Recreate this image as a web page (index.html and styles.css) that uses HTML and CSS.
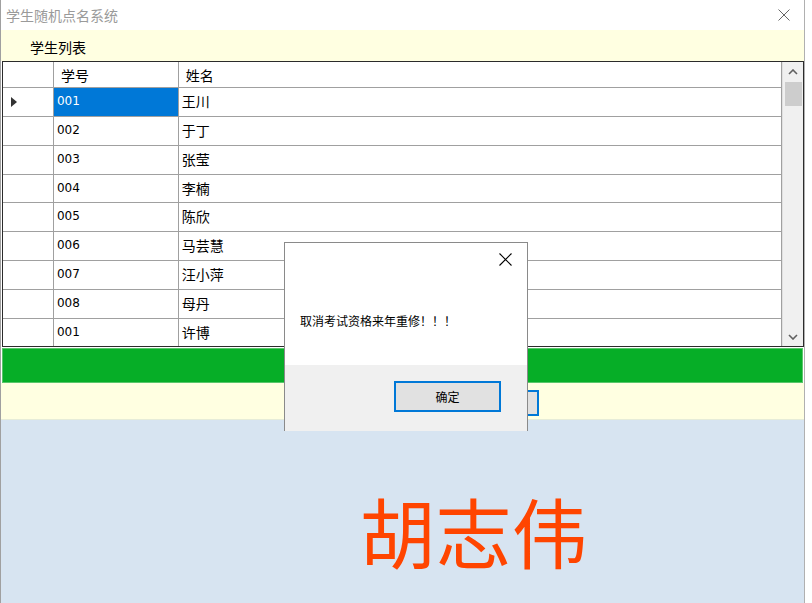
FILE: index.html
```html
<!DOCTYPE html>
<html lang="zh-CN">
<head>
  <meta charset="UTF-8">
  <title>学生随机点名系统</title>
  <link rel="stylesheet" href="styles.css">
</head>
<body>
<div class="win">
  <div class="titlebar">
    <span class="title">学生随机点名系统</span>
    <svg class="close" width="12" height="12" viewBox="0 0 12 12"><path d="M0.5 0.5L11.5 11.5M11.5 0.5L0.5 11.5" stroke="#666" stroke-width="1" fill="none"/></svg>
  </div>
  <div class="labelbar">学生列表</div>

  <div class="grid">
    <div class="grid-main">
      <div class="row head">
        <div class="rh"></div><div class="c1">学号</div><div class="c2">姓名</div>
      </div>
      <div class="row">
        <div class="rh"><span class="arrow"></span></div><div class="c1 num sel">001</div><div class="c2">王川</div>
      </div>
      <div class="row"><div class="rh"></div><div class="c1 num">002</div><div class="c2">于丁</div></div>
      <div class="row"><div class="rh"></div><div class="c1 num">003</div><div class="c2">张莹</div></div>
      <div class="row"><div class="rh"></div><div class="c1 num">004</div><div class="c2">李楠</div></div>
      <div class="row"><div class="rh"></div><div class="c1 num">005</div><div class="c2">陈欣</div></div>
      <div class="row"><div class="rh"></div><div class="c1 num">006</div><div class="c2">马芸慧</div></div>
      <div class="row"><div class="rh"></div><div class="c1 num">007</div><div class="c2">汪小萍</div></div>
      <div class="row"><div class="rh"></div><div class="c1 num">008</div><div class="c2">母丹</div></div>
      <div class="row"><div class="rh"></div><div class="c1 num">001</div><div class="c2">许博</div></div>
    </div>
    <div class="vscroll">
      <svg width="10" height="6" viewBox="0 0 10 6"><path d="M1 5L5 1L9 5" stroke="#606060" stroke-width="1.6" fill="none"/></svg>
      <div class="thumb"></div>
      <div class="track"></div>
      <svg width="10" height="6" viewBox="0 0 10 6"><path d="M1 1L5 5L9 1" stroke="#606060" stroke-width="1.6" fill="none"/></svg>
    </div>
  </div>

  <div class="greenbar"></div>
  <div class="btnbar"><button class="startbtn">开始</button></div>
  <div class="namepanel"><span class="bigname">胡志伟</span></div>
</div>

<div class="dialog">
  <div class="dlg-top">
    <svg class="dlg-close" width="13" height="13" viewBox="0 0 13 13"><path d="M0.5 0.5L12.5 12.5M12.5 0.5L0.5 12.5" stroke="#000" stroke-width="1.1" fill="none"/></svg>
    <div class="dlg-msg">取消考试资格来年重修！！！</div>
  </div>
  <div class="dlg-bottom">
    <button class="okbtn">确定</button>
  </div>
</div>
</body>
</html>
```

FILE: styles.css
```css
body { margin: 0; background: #fff; font-family: "Noto Sans CJK SC", "Noto Sans", sans-serif; }

.win {
  width: 803px;
  height: 603px;
  border-left: 1px solid #a0a0a0;
  border-right: 1px solid #b0b0b0;
  display: flex;
  flex-direction: column;
  overflow: hidden;
}

.titlebar {
  height: 30px;
  display: flex;
  align-items: center;
  justify-content: space-between;
  padding: 0 14px 0 5px;
  background: #fff;
}
.title { font-size: 14px; color: #9a9a9a; }

.labelbar {
  height: 31px;
  background: #ffffe1;
  font-size: 14px;
  color: #000;
  padding-left: 29px;
  line-height: 34px;
}

.grid {
  margin: 0 0 0 1px;
  width: 800px;
  height: 284px;
  border: 1px solid #2b2b2b;
  display: flex;
  background: #fff;
  overflow: hidden;
}
.grid-main { flex: 1; overflow: hidden; }
.row { display: flex; height: 28px; border-bottom: 1px solid #a0a0a0; }
.row.head { height: 25px; }
.row > div { box-sizing: border-box; border-right: 1px solid #a0a0a0; font-size: 14px; line-height: 27px; padding-left: 3px; white-space: nowrap; }
.row.head > div { line-height: 26px; padding-left: 7px; }
.row:nth-child(5) { height: 27px; }
.rh { width: 51px; position: relative; }
.c1 { width: 125px; }
.c2 { width: 604px; border-right: none; }
.num { font-family: "DejaVu Sans", sans-serif; font-size: 12px !important; }
.sel { background: #0078d7; color: #fff; }
.arrow {
  position: absolute;
  left: 8px;
  top: 9px;
  width: 0; height: 0;
  border-left: 6px solid #333;
  border-top: 5px solid transparent;
  border-bottom: 5px solid transparent;
}

.vscroll {
  width: 21px;
  background: #f0f0f0;
  border-left: 1px solid #e0e0e0;
  display: flex;
  flex-direction: column;
  align-items: center;
  padding: 7px 0 6px;
  box-sizing: border-box;
}
.thumb { width: 17px; height: 24px; background: #cdcdcd; margin-top: 7px; }
.track { flex: 1; }

.greenbar {
  height: 35px;
  margin: 1px 1px 0;
  background: #06ae27;
  border: 1px solid #58c66a;
  box-sizing: border-box;
}

.btnbar {
  height: 37px;
  background: #ffffe1;
  border-bottom: 1px solid #e6ecd8;
  padding-left: 440px;
  display: flex;
  align-items: center;
  box-sizing: border-box;
}
.startbtn {
  width: 98px;
  height: 26px;
  border: 2px solid #0078d7;
  background: #e1e1e1;
  font-family: inherit;
  font-size: 12px;
  margin-top: 4px;
}

.namepanel {
  flex: 1;
  background: #d7e4f1;
  display: flex;
  justify-content: center;
  padding: 72px 0 0 142px;
}
.bigname { font-size: 76px; color: #ff4500; line-height: 1; }

.dialog {
  position: absolute;
  left: 284px;
  top: 242px;
  width: 242px;
  height: 188px;
  border: 1px solid #8a8a8a;
  border-bottom: none;
  display: flex;
  flex-direction: column;
}
.dlg-top { height: 122px; background: #fff; position: relative; }
.dlg-close { position: absolute; right: 15px; top: 10px; }
.dlg-msg { padding: 69px 0 0 15px; font-size: 12px; color: #000; }
.dlg-bottom {
  flex: 1;
  background: #f0f0f0;
  display: flex;
  justify-content: flex-end;
  padding: 16px 26px 0 0;
}
.okbtn {
  width: 107px;
  height: 31px;
  border: 2px solid #0078d7;
  background: #e1e1e1;
  font-family: inherit;
  font-size: 12px;
  color: #000;
}
```
